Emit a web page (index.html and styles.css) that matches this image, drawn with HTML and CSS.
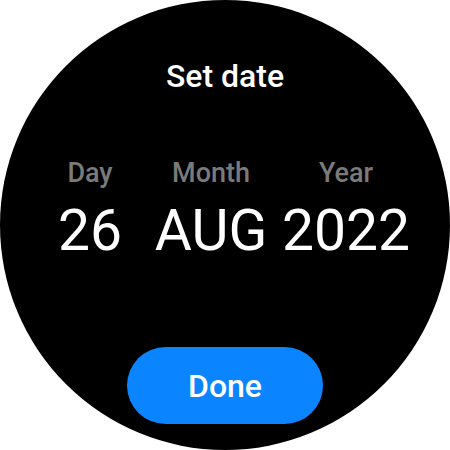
FILE: index.html
```html
<!DOCTYPE html>
<html>
<head>
<meta charset="utf-8">
<link rel="stylesheet" href="styles.css">
</head>
<body>
<div class="watch">
  <div class="title">Set date</div>
  <div class="picker">
    <div class="col col-day">
      <div class="label">Day</div>
      <div class="value">26</div>
    </div>
    <div class="col col-month">
      <div class="label">Month</div>
      <div class="value">AUG</div>
    </div>
    <div class="col col-year">
      <div class="label">Year</div>
      <div class="value">2022</div>
    </div>
  </div>
  <div class="actions">
    <button class="done">Done</button>
  </div>
</div>
</body>
</html>
```
FILE: styles.css
```css
html, body {
  margin: 0;
  padding: 0;
  background: #ffffff;
}
.watch {
  width: 450px;
  height: 450px;
  border-radius: 50%;
  background: #000000;
  font-family: Roboto, "Liberation Sans", sans-serif;
  color: #ffffff;
  display: flex;
  flex-direction: column;
  align-items: center;
  box-sizing: border-box;
  padding-top: 56px;
}
.title {
  font-size: 32px;
  font-weight: 500;
  line-height: 40px;
  height: 40px;
}
.picker {
  margin-top: 62px;
  display: grid;
  grid-template-columns: 120px 122px 148px;
  align-self: flex-start;
  margin-left: 30px;
}
.col {
  display: flex;
  flex-direction: column;
  align-items: center;
}
.label {
  font-size: 27px;
  font-weight: 500;
  color: #7a7a7a;
  line-height: 30px;
}
.value {
  margin-top: 15px;
  font-size: 57px;
  font-weight: 400;
  line-height: 56px;
}
.actions {
  margin-top: 88px;
}
.done {
  width: 196px;
  height: 77px;
  border: none;
  border-radius: 39px;
  background: #0b84ff;
  color: #ffffff;
  font-family: Roboto, "Liberation Sans", sans-serif;
  font-size: 32px;
  font-weight: 500;
  padding: 0;
}
```
